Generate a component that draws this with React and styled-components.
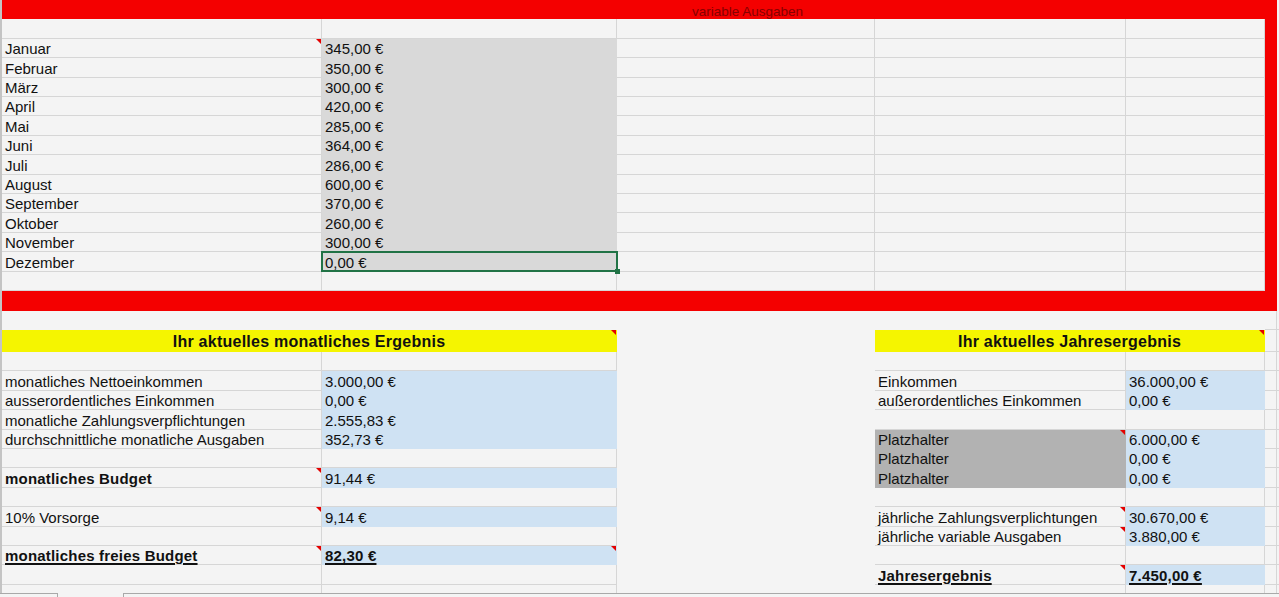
import React from 'react'
import styled, { createGlobalStyle, css } from 'styled-components'

const RED = '#f40000'
const GRAY = '#d9d9d9'
const DARK = '#b2b2b2'
const BLUE = '#cfe2f3'
const YELLOW = '#f5f500'
const LINE = '#d6d6d6'
const ROW = 19.42

const GlobalStyle = createGlobalStyle`
  html, body {
    margin: 0;
    padding: 0;
    background: #f4f4f4;
    overflow: hidden;
  }
  body {
    font-family: "Liberation Sans", Arial, sans-serif;
    color: #111;
  }
`

const Sheet = styled.div`
  display: grid;
  grid-template-columns: 320px 295px 258px 251px 139px 12px 1fr;
  grid-template-rows: repeat(17, ${ROW}px) 22px repeat(13, ${ROW}px);
  width: 1279px;
  height: 593px;
  box-sizing: border-box;
  border-left: 2px solid #c4c4c4;
  overflow: hidden;
`

const Cell = styled.div`
  position: relative;
  box-sizing: border-box;
  display: flex;
  align-items: ${p => (p.$head ? 'center' : 'flex-end')};
  justify-content: ${p => (p.$head || p.$title ? 'center' : 'flex-start')};
  grid-column: span ${p => p.$span || 1};
  padding: 0 3px;
  background: ${p => p.$fill || 'transparent'};
  border-right: 1px solid ${p => p.$fill || (p.$grid ? LINE : 'transparent')};
  border-bottom: 1px solid ${p => p.$fill || (p.$grid ? LINE : 'transparent')};
  font-size: 15px;
  line-height: 16px;
  white-space: nowrap;
  font-weight: ${p => (p.$bold || p.$head ? 700 : 400)};
  letter-spacing: ${p => (p.$head ? '0.25px' : p.$bold ? '0.2px' : '0')};

  ${p => p.$head && css`
    font-size: 16px;
    padding-top: 3px;
  `}

  ${p => p.$title && css`
    font-size: 13.5px;
    line-height: 13px;
    color: #860000;
    padding-left: 220px;
    padding-bottom: 0;
  `}

  ${p => p.$u && css`
    text-decoration: underline;
    text-decoration-thickness: 1.5px;
    text-underline-offset: 2px;
  `}

  ${p => p.$note && css`
    &::after {
      content: '';
      position: absolute;
      top: 0;
      right: 0;
      border-top: 5px solid #e40000;
      border-left: 5px solid transparent;
    }
  `}
`

const Selection = styled.div`
  position: absolute;
  top: -1px;
  left: -1px;
  right: -2px;
  bottom: -1px;
  border: 2px solid #217346;
  z-index: 2;
  pointer-events: none;

  &::after {
    content: '';
    position: absolute;
    right: -4px;
    bottom: -4px;
    width: 5px;
    height: 5px;
    background: #217346;
  }
`

const TabBar = styled.div`
  display: flex;
  height: 4px;
  width: 1279px;
`

const TabEdge = styled.div`
  flex: ${p => (p.$grow ? 1 : 'none')};
  width: ${p => p.$w}px;
  box-sizing: border-box;
  border-top: ${p => (p.$active ? 'none' : '1px solid #a9a9a9')};
  border-left: ${p => (p.$active ? '1px solid #a9a9a9' : 'none')};
  border-right: ${p => (p.$active ? '1px solid #a9a9a9' : 'none')};
`

const g = (text = '', o = {}) => ({ text, grid: true, ...o })
const n = (o = {}) => ({ text: '', grid: false, ...o })
const blue = (text, o = {}) => n({ text, fill: BLUE, ...o })

const months = [
  ['Januar', '345,00 €'],
  ['Februar', '350,00 €'],
  ['März', '300,00 €'],
  ['April', '420,00 €'],
  ['Mai', '285,00 €'],
  ['Juni', '364,00 €'],
  ['Juli', '286,00 €'],
  ['August', '600,00 €'],
  ['September', '370,00 €'],
  ['Oktober', '260,00 €'],
  ['November', '300,00 €'],
  ['Dezember', '0,00 €']
]

const emptyTop = [g(), g(), g(), g(), g(), n({ fill: RED }), n()]

const rows = [
  [n({ text: 'variable Ausgaben', fill: RED, span: 6, title: true }), n()],
  emptyTop,
  ...months.map(([m, v], i) => [
    g(m, { note: i === 0 }),
    n({ text: v, fill: GRAY, sel: i === 11 }),
    g(), g(), g(),
    n({ fill: RED }),
    n()
  ]),
  emptyTop,
  [n({ fill: RED, span: 6 }), n()],
  [n(), n(), n(), n(), n(), g(), g()],
  [
    n({ text: 'Ihr aktuelles monatliches Ergebnis', fill: YELLOW, span: 2, head: true, note: true }),
    n(),
    n({ text: 'Ihr aktuelles Jahresergebnis', fill: YELLOW, span: 2, head: true, note: true }),
    g(), g()
  ],
  [g(), g(), n(), g(), g(), g(), g()],
  [g('monatliches Nettoeinkommen'), blue('3.000,00 €'), n(), g('Einkommen'), blue('36.000,00 €'), g(), g()],
  [g('ausserordentliches Einkommen'), blue('0,00 €'), n(), g('außerordentliches Einkommen'), blue('0,00 €'), g(), g()],
  [g('monatliche Zahlungsverpflichtungen'), blue('2.555,83 €'), n(), g(), g(), g(), g()],
  [g('durchschnittliche monatliche Ausgaben'), blue('352,73 €'), n(), n({ text: 'Platzhalter', fill: DARK, note: true }), blue('6.000,00 €'), g(), g()],
  [g(), g(), n(), n({ text: 'Platzhalter', fill: DARK }), blue('0,00 €'), g(), g()],
  [g('monatliches Budget', { bold: true, note: true }), blue('91,44 €'), n(), n({ text: 'Platzhalter', fill: DARK }), blue('0,00 €'), g(), g()],
  [g(), g(), n(), g(), g(), g(), g()],
  [g('10% Vorsorge', { note: true }), blue('9,14 €'), n(), g('jährliche Zahlungsverplichtungen', { note: true }), blue('30.670,00 €'), g(), g()],
  [g(), g(), n(), g('jährliche variable Ausgaben', { note: true }), blue('3.880,00 €'), g(), g()],
  [g('monatliches freies Budget', { bold: true, u: true, note: true }), blue('82,30 €', { bold: true, u: true, note: true }), n(), g(), g(), g(), g()],
  [g(), g(), n(), g('Jahresergebnis', { bold: true, u: true, note: true }), blue('7.450,00 €', { bold: true, u: true }), g(), g()],
  [g(), g(), n(), g(), g(), g(), g()]
]

const SheetCell = ({ cell }) => (
  <Cell
    $span={cell.span}
    $fill={cell.fill}
    $grid={cell.grid}
    $bold={cell.bold}
    $u={cell.u}
    $note={cell.note}
    $head={cell.head}
    $title={cell.title}>
    {cell.text && <span>{cell.text}</span>}
    {cell.sel && <Selection />}
  </Cell>
)

export default function App() {
  return (
    <>
      <GlobalStyle />
      <Sheet>
        {rows.map((row, r) =>
          row.map((cell, c) => <SheetCell key={`${r}-${c}`} cell={cell} />))}
      </Sheet>
      <TabBar>
        <TabEdge $w={57} />
        <TabEdge $w={67} $active />
        <TabEdge $grow />
      </TabBar>
    </>
  )
}
